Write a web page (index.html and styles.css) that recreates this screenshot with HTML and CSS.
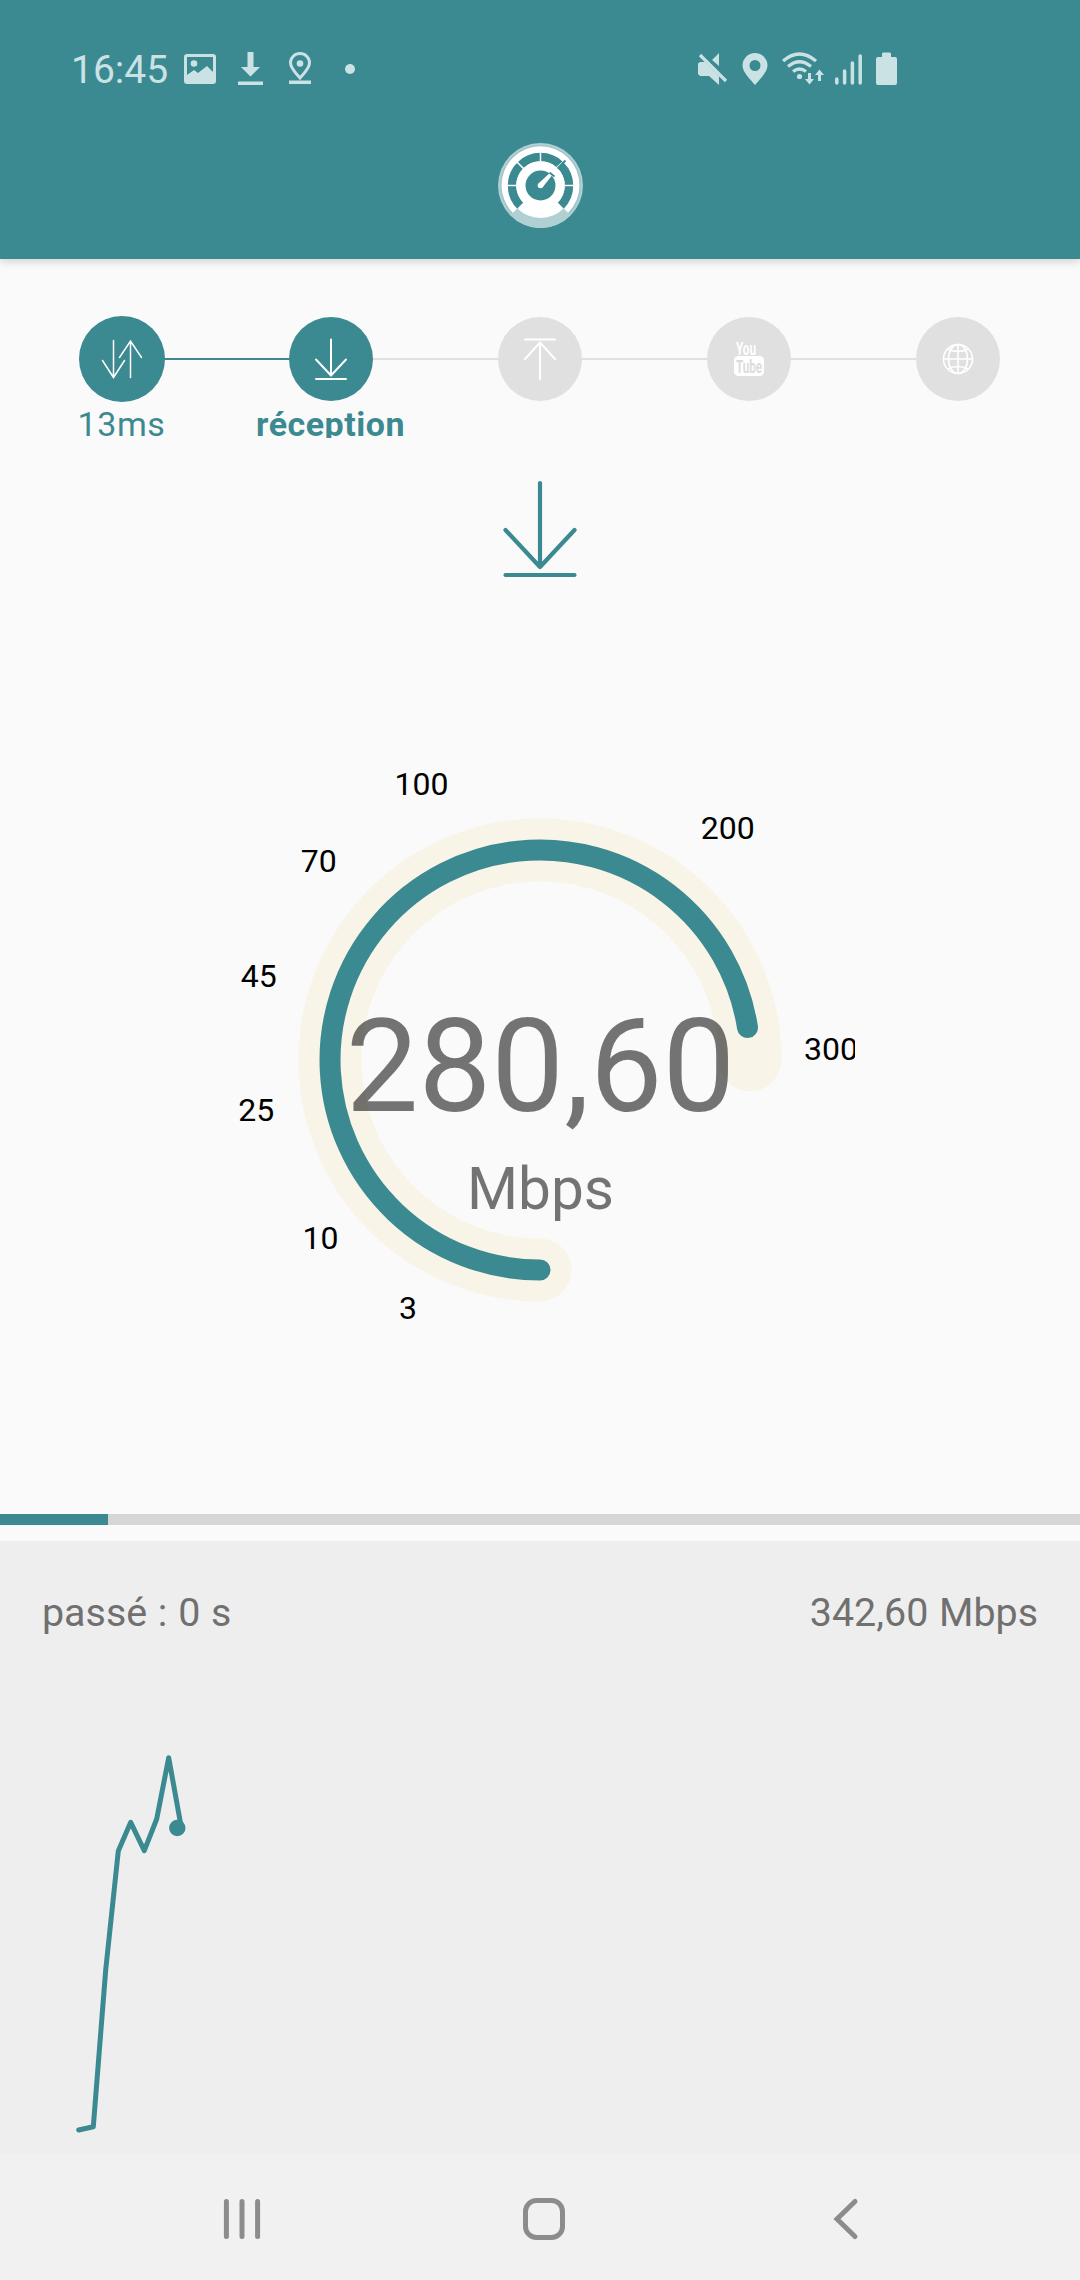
FILE: index.html
```html
<!DOCTYPE html>
<html lang="fr">
<head>
  <meta charset="UTF-8" />
  <meta name="viewport" content="width=device-width, initial-scale=1.0" />
  <title>Speed test</title>
  <link rel="stylesheet" href="styles.css">
</head>
<body>
  <header class="header">
    <div class="status">
      <div class="status-left">
        <span class="clock">16:45</span>
        <svg class="image-icon" width="32" height="30" viewBox="0 0 32 30">
          <path fill-rule="evenodd" d="M3 0h26a3 3 0 0 1 3 3v24a3 3 0 0 1-3 3H3a3 3 0 0 1-3-3V3a3 3 0 0 1 3-3zM3 3v18l7-5 4 3 9-7 6 6V3z" />
          <circle cx="10" cy="9.5" r="3.3" />
        </svg>
        <svg class="download-icon" width="25" height="34" viewBox="0 0 25 34">
          <path d="M9.500 0h6v15H22l-9.500 9.500L3 15h6.500zM0 29.500h25v3.500H0z" />
        </svg>
        <svg class="pin-icon" width="24" height="34" viewBox="0 0 24 34">
          <path class="pin-line" d="M12 26C8 21.500 2.500 16 2.500 11a9.500 9.500 0 0 1 19 0c0 5-5.500 10.500-9.500 15z" />
          <circle cx="12" cy="11.500" r="3.300" />
          <path d="M1 28.500h22V32H1z" />
        </svg>
        <span class="dot"></span>
      </div>
      <div class="status-right">
        <svg width="30" height="34" viewBox="0 0 30 34">
          <path d="M0 11.500L2 10h5l14 14v9l-10-9H2l-2-2zM21 1v13l-7-6z" />
          <path class="slash" d="M2 3l26 26" />
        </svg>
        <svg width="26" height="34" viewBox="0 0 26 34">
          <path fill-rule="evenodd" d="M13 33C8 27 .5 20 .5 13.500a12.500 12.500 0 0 1 25 0C25.500 20 18 27 13 33zM13 8a5.500 5.500 0 1 0 0 11 5.500 5.500 0 0 0 0-11z" />
        </svg>
        <svg width="42" height="34" viewBox="0 0 42 34">
          <path class="wave" d="M1 9q16.500-14 33 0M6 14.500q11.500-9.500 23 0M11 19.500q6.500-5 13 0" />
          <circle cx="17.500" cy="24.500" r="2.600" />
          <path d="M26 21h3v6h3l-4.500 5.500L23 27h3zM36 29h3v-6h3l-4.500-5.500L33 23h3z" />
        </svg>
        <svg class="signal-icon" width="27" height="34" viewBox="0 0 27 34">
          <path class="bar" d="M1.800 27v4M9.600 19v12M17.400 11v20M25.200 4v27" />
        </svg>
        <svg width="21" height="34" viewBox="0 0 21 34">
          <path d="M6 1.500L7 .5h7l1 1V5h4a2 2 0 0 1 2 2v24a2 2 0 0 1-2 2H2a2 2 0 0 1-2-2V7a2 2 0 0 1 2-2h4z" />
        </svg>
      </div>
    </div>
    <svg class="logo" width="86" height="86" viewBox="-43.500 -43.500 86 86">
      <circle r="42.500" fill="#b0d0d3" />
      <circle r="40.500" fill="#9ec5c9" />
      <path fill="#fff" d="M0 0L-27.500 27.500A39 39 0 1 1 27.500 27.500z" />
      <path fill="#b0d0d3" d="M-22 22L-30 30A42 42 0 0 0 30 30L22 22z" />
      <path class="logo-ring" d="M-20.200 20.200A28.500 28.500 0 1 1 20.200 20.200" />
      <path fill="#fff" d="M0 0L-23 23A32.500 32.500 0 0 0 23 23z" />
      <circle r="24.300" fill="#fff" />
      <path class="logo-tick" d="M-34-0H-24M34 0H24M0-34V-24M-24-24L-17-17" />
      <circle r="15" fill="#3b8991" />
      <path d="M-1.800-2.200L24-26 2.200 1.800z" fill="#fff" />
      <path d="M9-13L14-9M17-17L25-25" stroke="#3b8991" stroke-width="1.800" />
      <circle r="2.800" fill="#fff" />
    </svg>
  </header>

  <main class="test">
    <div class="steps">
      <div class="step done">
        <div class="circle">
          <svg width="44" height="44" viewBox="-22 -22 44 44">
            <path d="M-8.500-18.500V18.500M-19.500 1.500l11 17 11-17M8.500 18.500V-18M-2.500-1.500l11-16.500 11 16.500" />
          </svg>
        </div>
        <div class="label">13ms</div>
      </div>
      <div class="step current">
        <div class="circle">
          <svg width="44" height="44" viewBox="-22 -22 44 44">
            <path d="M0-19.500V16.500M-15 .5L0 16.500 15 .5M-15 20h30" />
          </svg>
        </div>
        <div class="label">réception</div>
      </div>
      <div class="step">
        <div class="circle">
          <svg width="44" height="44" viewBox="-22 -22 44 44">
            <path d="M0 20V-16.500M-15 0L0-16.500 15 0M-15-19.500h30" />
          </svg>
        </div>
      </div>
      <div class="step">
        <div class="circle">
          <svg width="44" height="44" viewBox="-22 -22 44 44">
            <text class="you" x="-13" y="-4" textLength="20" lengthAdjust="spacingAndGlyphs">You</text>
            <rect class="tube-box" x="-15" y="-3" width="30" height="20" rx="4.500" />
            <text class="tube" x="-13" y="14" textLength="26" lengthAdjust="spacingAndGlyphs">Tube</text>
          </svg>
        </div>
      </div>
      <div class="step">
        <div class="circle">
          <svg width="44" height="44" viewBox="-22 -22 44 44">
            <circle class="globe" r="14.500" />
            <ellipse class="globe" rx="9.500" ry="14.500" />
            <path class="globe" d="M0-14.500v29M-14.500 0h29M-10.500-10q10.500 5 21 0M-10.500 10q10.500-5 21 0" />
          </svg>
        </div>
      </div>
    </div>

    <svg class="direction" width="80" height="100" viewBox="-40 0 80 100">
      <path d="M0 3V87M-34.500 50L0 87 34.500 50M-34.500 95h69" />
    </svg>

    <svg class="gauge" width="630" height="630" viewBox="-315 -315 630 630">
      <path class="track" d="M0 210A210 210 0 1 1 210 0" />
      <path class="value-arc" d="M0 210A210 210 0 1 1 207.500-32.500" />
      <g class="ticks">
        <text x="-132" y="259">3</text>
        <text x="-219.500" y="189">10</text>
        <text x="-283.800" y="61">25</text>
        <text x="-281.200" y="-73">45</text>
        <text x="-221.300" y="-188">70</text>
        <text x="-118.500" y="-265">100</text>
        <text x="187.700" y="-221">200</text>
        <text x="291" y="0">300</text>
      </g>
      <text class="speed" x="0.500" y="51">280,60</text>
      <text class="unit" x="0.500" y="149">Mbps</text>
    </svg>

    <div class="progress"><div class="progress-fill" style="width: 10%"></div></div>
  </main>

  <section class="history">
    <div class="history-info">
      <span>passé : 0 s</span>
      <span>342,60 Mbps</span>
    </div>
    <svg class="chart" width="1080" height="440" viewBox="0 0 1080 440">
      <polyline points="78.700,416 93.300,412.700 105.700,256 118.300,137 130.700,108.300 144.300,136.700 156.700,105 168.700,43.700 180.300,108" />
      <circle cx="177.300" cy="114" r="8.200" />
    </svg>
  </section>

  <nav class="navbar">
    <svg width="44" height="44" viewBox="-22 -22 44 44">
      <path d="M-15.600-17.500v35M0-17.500v35M15.600-17.500v35" />
    </svg>
    <svg width="44" height="44" viewBox="-22 -22 44 44">
      <rect x="-18.500" y="-18.500" width="37" height="37" rx="11" />
    </svg>
    <svg width="44" height="44" viewBox="-22 -22 44 44">
      <path d="M9-17.500L-9 0 9 17.500" />
    </svg>
  </nav>
</body>
</html>
```
FILE: styles.css
```css
* {
  margin: 0;
  padding: 0;
  box-sizing: border-box;
}
body {
  width: 1080px;
  height: 2280px;
  display: flex;
  flex-direction: column;
  background-color: #fafafa;
  font-family: Roboto, sans-serif;
  overflow: hidden;
}
svg {
  display: block;
  flex: none;
}

.header {
  height: 259px;
  flex: none;
  background-color: #3b8991;
  box-shadow: 0 2px 9px rgba(0, 0, 0, 0.18);
}

.status {
  height: 142px;
  padding: 52px 183px 56px 71px;
  display: flex;
  justify-content: space-between;
  color: #cbe2e5;
}

.status svg {
  fill: #cbe2e5;
}

.status-left, .status-right {
  display: flex;
  align-items: center;
}

.clock {
  width: 113px;
  padding-top: 2px;
  font-size: 39px;
  line-height: 34px;
}

.download-icon {
  margin-left: 22px;
}

.pin-icon {
  margin-left: 25px;
}

.status .pin-line {
  fill: none;
  stroke: #cbe2e5;
  stroke-width: 3;
}

.dot {
  width: 10px;
  height: 10px;
  margin-left: 33px;
  border-radius: 50%;
  background-color: #cbe2e5;
}

.status-right {
  gap: 14px;
}

.status-right .signal-icon {
  margin-left: -3px;
}

.status .slash, .status .wave, .status .bar {
  fill: none;
  stroke: #cbe2e5;
  stroke-width: 3.2;
}

.status .bar {
  stroke-width: 3.5;
  stroke-linecap: round;
}

.logo {
  margin: 0 auto;
}

.logo-ring {
  fill: none;
  stroke: #3b8991;
  stroke-width: 8.5;
}

.logo-tick {
  stroke: #fff;
  stroke-width: 1.5;
}

.test {
  height: 1282px;
  flex: none;
}

.steps {
  height: 179px;
  padding: 57px 17px 0;
  display: grid;
  grid-template-columns: repeat(5, 209px);
}

/* connector lines are drawn by the step itself, half on each side */
.step {
  display: flex;
  flex-direction: column;
  align-items: center;
  background: linear-gradient(#e0e0e0, #e0e0e0) 0 42px / 100% 2px no-repeat;
}

.step:first-child {
  background: linear-gradient(#3b8991, #3b8991) 100% 42px / 50% 2px no-repeat;
}

.step:last-child {
  background-size: 50% 2px;
}

.step.current {
  background: linear-gradient(90deg, #3b8991 50%, #e0e0e0 50%) 0 42px / 100% 2px no-repeat;
}

.circle {
  width: 84px;
  height: 84px;
  margin-top: 1px;
  display: flex;
  align-items: center;
  justify-content: center;
  border-radius: 50%;
  background-color: #e0e0e0;
}

.done .circle {
  width: 86px;
  height: 86px;
  margin: 0 0 -1px;
}

.done .circle, .current .circle {
  background-color: #3b8991;
}

.circle svg {
  fill: none;
  stroke: #fff;
  stroke-width: 2;
  stroke-linecap: round;
}

.done .circle svg {
  stroke-width: 1.5;
}

.circle .you, .circle .tube {
  font-size: 19px;
  font-weight: bold;
  fill: #fff;
  stroke: none;
}

.circle .tube {
  fill: #dcdcdc;
}

.circle .tube-box {
  fill: #fff;
  stroke: none;
}

.circle .globe {
  stroke-width: 1.6;
}

.label {
  height: 37px;
  overflow: hidden;
  font-size: 34px;
  line-height: 46px;
  letter-spacing: 0.6px;
  color: #3b8991;
}

.current .label {
  font-weight: bold;
  letter-spacing: 0.5px;
}

.direction {
  margin: 42px auto 0;
  fill: none;
  stroke: #3b8991;
  stroke-width: 4.2;
  stroke-linecap: round;
  stroke-linejoin: round;
}

.gauge {
  margin: 165px auto 0;
  overflow: hidden;
  text-anchor: middle;
}

.track, .value-arc {
  fill: none;
  stroke-linecap: round;
}

.track {
  stroke: #f8f4e7;
  stroke-width: 63;
}

.value-arc {
  stroke: #3b8991;
  stroke-width: 21;
}

.ticks {
  font-size: 32px;
  fill: #000;
}

.speed, .unit {
  fill: rgba(0, 0, 0, 0.54);
}

.speed {
  font-size: 129.5px;
}

.unit {
  font-size: 58.5px;
}

.progress {
  height: 11px;
  margin-top: 139px;
  background-color: #d6d6d6;
}

.progress-fill {
  height: 100%;
  background-color: #3b8991;
}

.history {
  height: 613px;
  flex: none;
  background-color: #eee;
}

.history-info {
  height: 173px;
  padding: 49px 42px 0;
  display: flex;
  justify-content: space-between;
  font-size: 39.4px;
  line-height: 46px;
  word-spacing: 1px;
  color: #707070;
}

.chart {
  fill: none;
  stroke: #3b8991;
  stroke-width: 5;
  stroke-linecap: round;
  stroke-linejoin: round;
}

.chart circle {
  fill: #3b8991;
  stroke: none;
}

.navbar {
  height: 126px;
  padding: 4px 212px 0 220px;
  display: flex;
  align-items: center;
  justify-content: space-between;
  background-color: #f1f1f1;
}

.navbar svg {
  fill: none;
  stroke: #8c8c8c;
  stroke-width: 5;
  stroke-linecap: round;
}
```
